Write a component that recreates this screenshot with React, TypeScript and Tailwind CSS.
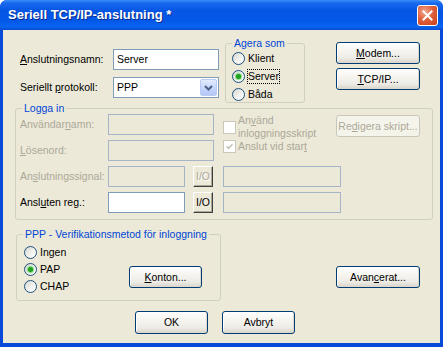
import type { ReactNode } from 'react'

const gray = 'text-[#ACA899]'

function Button({
  children,
  className = '',
  disabled = false,
}: {
  children: ReactNode
  className?: string
  disabled?: boolean
}) {
  return (
    <div
      className={`flex h-[22px] shrink-0 items-center justify-center rounded-[3px] border ${
        disabled
          ? 'border-[#C9C7BA] bg-[#F5F4EA] text-[#ACA899]'
          : 'border-[#003C74] bg-[linear-gradient(to_bottom,#FFFFFF_0%,#F5F4EF_40%,#ECEBE5_75%,#D9D4C9_100%)] text-black shadow-[inset_-1px_-1px_0_#DCD8CE,inset_1px_1px_0_#FFFFFF]'
      } ${className}`}
    >
      {children}
    </div>
  )
}

function TextBox({ value = '', className = '', disabled = false }: { value?: string; className?: string; disabled?: boolean }) {
  return (
    <div
      className={`flex h-[21px] shrink-0 items-center border px-[3px] ${
        disabled ? 'border-[#A5B4C6] bg-[#ECE9D8]' : 'border-[#7F9DB9] bg-white'
      } ${className}`}
    >
      {value}
    </div>
  )
}

function IOButton({ disabled = false }: { disabled?: boolean }) {
  return (
    <div
      className={`ml-[8px] flex h-[21px] w-[20px] shrink-0 items-center justify-center border border-t-white border-l-white border-r-[#404040] border-b-[#404040] bg-[#ECE9D8] shadow-[inset_-1px_-1px_0_#ACA899] ${
        disabled ? 'text-[#ACA899] [text-shadow:1px_1px_0_#FFFFFF]' : 'text-black'
      }`}
    >
      I/O
    </div>
  )
}

function Radio({ label, checked = false, focus = false, h = 'h-[18px]' }: { label: string; checked?: boolean; focus?: boolean; h?: string }) {
  return (
    <div className={`flex items-center ${h}`}>
      <span className="flex h-[13px] w-[13px] shrink-0 items-center justify-center rounded-full border border-[#1C5180] bg-[linear-gradient(135deg,#D6D6D0_0%,#F4F4F2_60%,#FFFFFF_100%)]">
        {checked && <span className="h-[5px] w-[5px] rounded-full bg-[#21A121] shadow-[0_0_1px_1px_#7FD97F]" />}
      </span>
      <span className={`ml-[3px] ${focus ? 'outline-1 outline-dotted outline-black' : ''}`}>{label}</span>
    </div>
  )
}

function Check({ checked = false }: { checked?: boolean }) {
  return (
    <span className="flex h-[13px] w-[13px] shrink-0 items-center justify-center border border-[#CAC8BB] bg-white">
      {checked && (
        <svg width="7" height="7" viewBox="0 0 7 7">
          <path d="M0.5 3.2 L2.6 5.3 L6.5 1.2" fill="none" stroke="#C4C2B5" strokeWidth="1.6" />
        </svg>
      )}
    </span>
  )
}

export default function App() {
  return (
    <div className="flex h-[347px] w-[443px] flex-col overflow-hidden rounded-t-[7px] bg-[#0A4AD8] font-['Liberation_Sans',Arial,sans-serif] text-[10.5px] leading-[13px] text-black">
      {/* titelrad */}
      <div className="flex h-[30px] shrink-0 items-center justify-between bg-[linear-gradient(to_bottom,#3D8EF8_0%,#1A6AEF_10%,#0656E4_35%,#0458E8_70%,#0865F1_88%,#0A4DD2_100%)] pl-[8px] pr-[5px]">
        <span className="text-[13px] font-bold leading-[16px] text-white [text-shadow:1px_1px_0_#0A2A8A]">Seriell TCP/IP-anslutning *</span>
        <div className="flex h-[21px] w-[21px] items-center justify-center rounded-[3px] border border-white bg-[radial-gradient(circle_at_35%_30%,#F2A88F_0%,#E2603D_45%,#C6401A_100%)]">
          <svg width="11" height="11" viewBox="0 0 11 11">
            <path d="M1.5 1.5 L9.5 9.5 M9.5 1.5 L1.5 9.5" stroke="white" strokeWidth="2" strokeLinecap="square" />
          </svg>
        </div>
      </div>

      <div className="mx-[3px] mb-[4px] flex flex-1 flex-col bg-[#ECE9D8]">
        {/* överdel */}
        <div className="flex h-[72px] shrink-0 items-start">
          <div className="ml-[17px] mt-[19px] flex flex-col">
            <div className="flex h-[20px] items-center">
              <span className="w-[93px]">
                <u>A</u>nslutningsnamn:
              </span>
              <TextBox value="Server" className="h-[20px] w-[106px]" />
            </div>
            <div className="mt-[8px] flex h-[21px] items-center">
              <span className="w-[93px]">
                Seriellt <u>p</u>rotokoll:
              </span>
              <div className="flex h-[21px] w-[106px] items-center justify-between border border-[#7F9DB9] bg-white pl-[3px] pr-px">
                <span>PPP</span>
                <div className="flex h-[17px] w-[17px] items-center justify-center rounded-[2px] border border-[#B9CBF3] bg-[linear-gradient(to_bottom,#E3EBFE_0%,#C8D7FC_50%,#B4C8F6_100%)]">
                  <svg width="9" height="6" viewBox="0 0 9 6">
                    <path d="M1 1 L4.5 4.5 L8 1" fill="none" stroke="#4D6185" strokeWidth="2" />
                  </svg>
                </div>
              </div>
            </div>
          </div>

          <fieldset className="ml-[6px] mt-[7px] h-[66px] w-[80px] shrink-0 rounded-[3px] border border-[#D0D0BF]">
            <legend className="ml-[6px] px-[2px] leading-[12px] text-[#0046D5]">Agera som</legend>
            <div className="flex flex-col pl-[6px]">
              <Radio label="Klient" />
              <Radio label="Server" checked focus />
              <Radio label="Båda" />
            </div>
          </fieldset>

          <div className="ml-[31px] mt-[12px] flex flex-col gap-[4px]">
            <Button className="w-[84px]">
              <u>M</u>odem...
            </Button>
            <Button className="w-[84px]">
              <u>T</u>CP/IP...
            </Button>
          </div>
        </div>

        {/* Logga in */}
        <fieldset className="ml-[12px] h-[118px] w-[418px] shrink-0 rounded-[3px] border border-[#D0D0BF]">
          <legend className="ml-[6px] px-[2px] leading-[12px] text-[#0046D5]">Logga in</legend>
          <div className="flex flex-col pl-[4px]">
            <div className="flex items-start">
              <div className="flex flex-col gap-[5px]">
                <div className="flex h-[21px] items-center">
                  <span className={`w-[88px] ${gray}`}>
                    Användar<u>n</u>amn:
                  </span>
                  <TextBox disabled className="w-[106px]" />
                </div>
                <div className="flex h-[21px] items-center">
                  <span className={`w-[88px] ${gray}`}>
                    <u>L</u>ösenord:
                  </span>
                  <TextBox disabled className="w-[106px]" />
                </div>
              </div>
              <div className={`ml-[9px] flex w-[113px] flex-col ${gray}`}>
                <div className="flex items-center">
                  <Check />
                  <span className="ml-[2px] leading-[13px]">
                    An<u>v</u>änd
                    <br />
                    inloggningsskript
                  </span>
                </div>
                <div className="flex h-[13px] items-center">
                  <Check checked />
                  <span className="ml-[2px]">
                    Anslut vid star<u>t</u>
                  </span>
                </div>
              </div>
              <Button disabled className="mt-[1px] h-[21px] w-[84px]">
                Re<u>d</u>igera skript...
              </Button>
            </div>

            <div className="mt-[5px] flex flex-col gap-[5px]">
              <div className="flex h-[21px] items-center">
                <span className={`w-[88px] ${gray}`}>
                  An<u>s</u>lutningssignal:
                </span>
                <TextBox disabled className="w-[77px]" />
                <IOButton disabled />
                <TextBox disabled className="ml-[10px] w-[118px]" />
              </div>
              <div className="flex h-[21px] items-center">
                <span className="w-[88px]">
                  Ansl<u>u</u>ten reg.:
                </span>
                <TextBox className="w-[77px]" />
                <IOButton />
                <TextBox disabled className="ml-[10px] w-[118px]" />
              </div>
            </div>
          </div>
        </fieldset>

        {/* PPP */}
        <div className="mt-[8px] flex shrink-0 items-start">
          <fieldset className="ml-[13px] h-[73px] w-[205px] shrink-0 rounded-[3px] border border-[#D0D0BF]">
            <legend className="ml-[6px] px-[2px] leading-[12px] text-[#0046D5]">PPP - Verifikationsmetod för inloggning</legend>
            <div className="flex items-start pl-[7px] pt-[4px]">
              <div className="flex w-[105px] flex-col">
                <Radio label="Ingen" h="h-[17px]" />
                <Radio label="PAP" checked h="h-[17px]" />
                <Radio label="CHAP" h="h-[17px]" />
              </div>
              <Button className="mt-[22px] w-[73px]">
                <u>K</u>onton...
              </Button>
            </div>
          </fieldset>
          <Button className="ml-[115px] mt-[38px] w-[84px]">
            Avan<u>c</u>erat...
          </Button>
        </div>

        <div className="mt-[10px] flex">
          <Button className="ml-[132px] h-[23px] w-[73px]">OK</Button>
          <Button className="ml-[14px] h-[23px] w-[73px]">Avbryt</Button>
        </div>
      </div>
    </div>
  )
}
